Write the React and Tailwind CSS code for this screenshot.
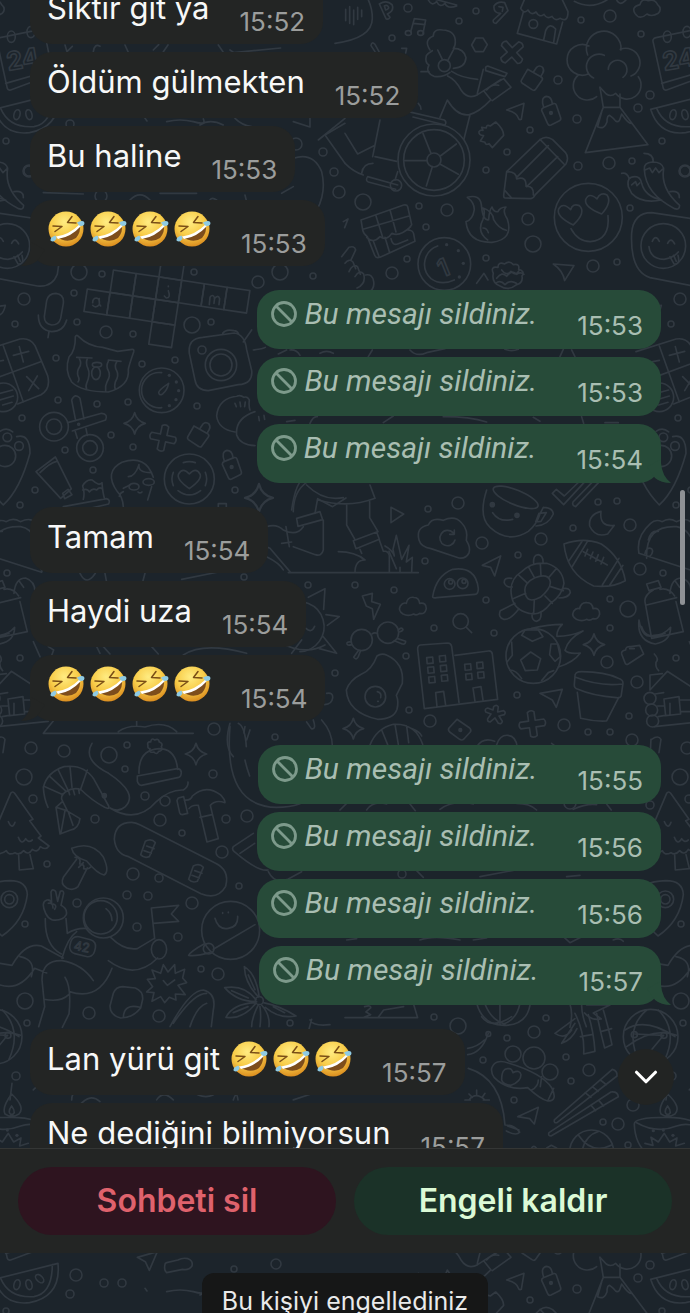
import { ChevronDown } from "lucide-react";

const groups = [
  {
    own: false,
    items: [
      { text: "Siktir git ya", time: "15:52" },
      { text: "Öldüm gülmekten", time: "15:52" },
      { text: "Bu haline", time: "15:53" },
      { laughs: 4, time: "15:53" },
    ],
  },
  {
    own: true,
    items: [{ time: "15:53" }, { time: "15:53" }, { time: "15:54" }],
  },
  {
    own: false,
    items: [
      { text: "Tamam", time: "15:54" },
      { text: "Haydi uza", time: "15:54" },
      { laughs: 4, time: "15:54" },
    ],
  },
  {
    own: true,
    items: [
      { time: "15:55" },
      { time: "15:56" },
      { time: "15:56" },
      { time: "15:57" },
    ],
  },
  {
    own: false,
    items: [
      { text: "Lan yürü git", laughs: 3, time: "15:57" },
      { text: "Ne dediğini bilmiyorsun", time: "15:57", open: true },
    ],
  },
];

// wallpaper bubbles: x, y, radius
const dots = [
  [408, 8, 4], [476, 11, 3], [459, 21, 3], [392, 38, 3], [581, 20, 3], [610, 16, 6], [641, 34, 3],
  [558, 80, 4], [650, 95, 4], [638, 108, 4], [577, 119, 4], [530, 130, 3], [507, 152, 3], [486, 170, 3],
  [578, 166, 4], [609, 163, 6], [632, 161, 3], [662, 141, 3], [685, 171, 5], [363, 202, 8], [419, 206, 3],
  [447, 210, 6], [426, 227, 3], [528, 219, 6], [533, 244, 8], [630, 208, 3], [407, 259, 3], [392, 273, 6],
  [486, 258, 3], [593, 266, 6], [617, 262, 3], [24, 299, 6], [15, 324, 3], [74, 293, 3], [77, 322, 3],
  [106, 332, 6], [133, 334, 3], [192, 325, 8], [211, 322, 3], [258, 282, 6], [280, 272, 8], [313, 276, 3],
  [56, 358, 3], [142, 364, 3], [175, 360, 3], [58, 400, 3], [97, 404, 3], [128, 402, 3], [197, 406, 3],
  [22, 418, 3], [111, 435, 3], [65, 450, 3], [133, 447, 3], [93, 470, 3], [35, 490, 3], [20, 505, 3],
  [235, 490, 3], [194, 272, 3], [102, 274, 3], [79, 272, 8], [428, 509, 3], [458, 503, 6], [482, 543, 6],
  [425, 561, 3], [355, 585, 3], [394, 590, 3], [518, 555, 3], [541, 539, 6], [573, 528, 3], [598, 502, 3],
  [617, 501, 3], [630, 525, 6], [640, 569, 6], [486, 600, 3], [494, 633, 3], [434, 628, 3], [406, 656, 3],
  [409, 710, 3], [430, 721, 6], [517, 695, 3], [610, 599, 3], [628, 609, 8], [610, 628, 3], [607, 662, 6],
  [637, 682, 6], [676, 658, 3], [629, 716, 3], [564, 725, 6], [588, 732, 3], [610, 732, 3], [632, 740, 6],
  [7, 573, 3], [244, 577, 3], [308, 585, 3], [335, 673, 3], [214, 729, 6], [275, 737, 3], [31, 748, 6],
  [64, 751, 6], [109, 755, 8], [127, 745, 3], [125, 769, 3], [24, 777, 8], [33, 799, 4], [213, 774, 4],
  [145, 796, 4], [165, 801, 5], [160, 820, 6], [95, 819, 4], [182, 833, 3], [226, 819, 4], [247, 816, 6],
  [222, 852, 6], [47, 864, 3], [133, 874, 6], [159, 878, 4], [239, 886, 3], [127, 895, 4], [148, 896, 4],
  [192, 903, 6], [77, 903, 4], [137, 927, 4], [25, 924, 3], [178, 937, 4], [201, 969, 3], [218, 974, 6],
  [25, 1001, 8], [89, 1013, 6], [159, 1016, 6], [27, 1023, 3], [290, 1023, 3], [650, 805, 4], [402, 874, 4],
  [570, 803, 6], [434, 1017, 3], [458, 1026, 8], [546, 1018, 3], [507, 1038, 3], [534, 1032, 6],
  [566, 1057, 3], [589, 1070, 6], [571, 1081, 3], [483, 1060, 3], [514, 1100, 3], [603, 1122, 3],
  [618, 1124, 6], [628, 1145, 3], [633, 1105, 6], [513, 1054, 8], [534, 1058, 11], [550, 1072, 8],
  [16, 1076, 4], [76, 105, 6], [104, 113, 4], [122, 113, 4], [70, 124, 4], [234, 99, 3], [276, 94, 5],
  [29, 171, 6], [101, 196, 6], [296, 144, 6], [323, 152, 4], [334, 172, 4], [339, 192, 6],
];

const crossword = [
  [3, -2], [1, -1], [2, -1], [3, -1], [4, -1], [5, -1], [6, -1],
  [0, 0], [1, 0], [2, 0], [3, 0], [3, 1],
];

const windows = [
  [245, 503], [283, 498], [248, 532], [286, 527], [251, 561], [289, 556],
  [359, 523], [395, 518], [362, 552], [398, 547],
];

const Sparkle = ({ x, y, r = 30 }) => (
  <path
    transform={`translate(${x} ${y}) scale(${r / 30})`}
    d="M0-30Q6-6 30 0Q6 6 0 30Q-6 6-30 0Q-6-6 0-30z"
  />
);

const Cross = ({ x, y, turn = 12 }) => (
  <path
    transform={`translate(${x} ${y}) rotate(${turn})`}
    d="M-10-36q10-8 20 0v26h26q8 10 0 20H10v26q-10 8-20 0V10h-26q-8-10 0-20h26z"
  />
);

const Cloud = ({ x, y }) => (
  <path
    transform={`translate(${x} ${y})`}
    d="M-30 20q-16-10-8-24q8-12 18-8q4-20 22-18q16 0 18 18q20-4 20 16q-4 18-20 14q-10 8-18 2q-16 8-32 0z"
  />
);

const Perfume = ({ x, y }) => (
  <g transform={`translate(${x} ${y})`}>
    <path d="M-15-27L26-4q6 4 2 10L8 34q-4 4-10 0l-30-20q-4-4-2-8z" />
    <path d="M2-18l10-15q8-8 18 0q6 10 0 18l-6 10" />
  </g>
);

const Lock = ({ x, y }) => (
  <g transform={`translate(${x} ${y})`}>
    <path d="M-28-8q0-6 5-8l30-12q7-2 9 4l13 38q2 7-5 10L0 36q-7 3-10-4z" />
    <path d="M-22-18q-10-28 8-32q16 0 18 22" />
    <circle r="4" fill="currentColor" />
  </g>
);

const Doodles = () => (
  <>
    {dots.map(([x, y, r]) => (
      <circle key={`${x}-${y}`} cx={x} cy={y} r={r} />
    ))}

    <g strokeWidth="5">
      {/* top right */}
      <g transform="translate(345 0) scale(.3333)">
        <path d="M-30 130Q82 115 82 55Q82 20 65-10M2 28v34M14 20v50M26 30v44M38 22v36M50 30v20" />
        <path d="M103 12q22-14 38 2q8 18-14 28l8 10q-4 8-12 4zM118 18q8-4 12 2t-8 10z" />
        <path d="M447 18q12-16 32-10l10 24-36 38q-10 0-8-10l22-20q-22 0-20-22zM462 20l12 2-2 12" />
        <path d="M250 0q10 20 25 5q10 20 25 5q8 18 35 8M260-5l75 20" />
        <path d="M208 56l34 4-8 40M208 56l-11 40M205 70l35 4" />
        <ellipse cx="190" cy="99" rx="9" ry="7" />
        <ellipse cx="227" cy="99" rx="9" ry="7" />
        <path d="M170 145l15 0-3 14M90 155l-12-18q2-14 12-4l12 22" />
        <path d="M392 114h22l13 20-12 21h-24l-11-20z" />
        <Cross x="501" y="157" turn="48" />
        <path d="M535 36l-18 64 118 32 18-66M540-5l-13 30q10 18 22 5q10 18 24 6q10 18 24 7q10 16 24 6q10 16 24 6q24 14 24-20l-20-42M596 120l6-28q12-26 30-5l-6 40" />
        <circle cx="565" cy="72" r="13" />
        <path d="M688 4q48 26 98-4M815 0q10 20 28 0" />
        <path d="M870 40q-12-20 15-26q5-20 25-12q20-6 28 12q14 12 2 26q-20 12-34 2q-22 20-36-2z" />
        <path d="M925 128q-4-12 8-15l122-25q10 0 12 10l25 125-127 47q-8 2-10-5zM950 250l140-40" />
        <ellipse cx="967" cy="110" rx="12" ry="17" />
        <ellipse cx="1026" cy="96" rx="12" ry="17" />
        <text x="958" y="212" transform="rotate(-10 958 212)" fontSize="76" fontFamily="Inter, sans-serif" fontWeight="700">24</text>
        <path d="M255 150q-20-30 10-42q0-22 28-18q38 2 38 35q0 14-6 20q32 0 38 28q-2 30-38 32M278 150l14 28M326 148l-18 34M262 152q-14 8-18 15q-5 22 8 28q-12 22 15 34q28 4 48-12M228 215h24" />
        <circle cx="298" cy="197" r="18" />
        <path d="M308 228q25 12 40 42q20 30 50 14l70-46M320 214q30 20 78 24M422 202q4-6 12-2l52 20-6 10-58-18zM415 208l-18 72M442 302l56-40-22-26-60 36 22 28M425 270q16-20 36-14M285 352l22-52q30 50 66 44q30-8 62-42M375 345l-18 72" />
        <Perfume x="563" y="235" />
        <path d="M485 330l52-20-8 48q-5 2-8-2q-5-20-36-26z" />
        <Lock x="618" y="339" />
        <path d="M410 382l14 2q0-12 12-6l16-12q24 22 24 40l-34 37-10-12q-10 6-12-4l-14-4 10-16q-16-2-14-12q4-6 12-4z" />
        <path d="M190 335l108 25q8 6 2 15l-96-24M220 310q8 8 8 18" />
        <circle cx="267" cy="480" r="108" />
        <circle cx="267" cy="480" r="91" />
        <circle cx="267" cy="480" r="21" />
        <path d="M178 482h68M286 468l48-36M286 493l54 30M262 500l-18 58M258 460l-24-60M-80 420l80-65M0 400l38 62 52-26M0 490q25 25 55 35M105 360l-22 110M90 470l65 14M50 520q4-30 34-30M68 530l90 25M68 530q-8 12 2 16l82 22M158 515l-8 25" />
        <circle cx="153" cy="556" r="17" />
        <path d="M730 222a46 46 0 1 1 2-84M728 165a52 52 0 1 1 100-15M826 148a43 43 0 1 1 32 80M880 230a38 38 0 0 1-68 50q-14 12-28 2l-19-20M700 225a38 38 0 1 0 55 65M746 234a34 34 0 1 1 32-68M790 208a28 28 0 1 1 44 24" />
        <path d="M765 262l10 60h50v-40M775 322l-54 136 188-24-84-112M770 336l-12 44q20 10 28-14q0-20 8-20l12 10q12 16 18 4l6-18q20 30 30 28" />
        <path d="M917 328L1107 280q10 100-85 118q-80 10-105-70zM935 325q25 60 100 55q55-10 55-96" />
        <ellipse cx="984" cy="344" rx="9" ry="15" transform="rotate(15 984 344)" />
        <ellipse cx="1020" cy="344" rx="9" ry="15" transform="rotate(-15 1020 344)" />
        <ellipse cx="1052" cy="326" rx="9" ry="15" transform="rotate(-45 1052 326)" />
        <path d="M485 515l100-96q18-14 38 0l38 38q12 15 2 35l-92 92q-6 12-15 12l-76-2q-4 0-4-8zM585 418l72 74M515 532l95-95M545 560l93-90M485 515q30 0 30 22q30-10 28 22q24-2 22 26M480 572l20 22" />
        <path d="M367 592q38-10 42 22q4 50 22 45q2-30 10-38q5 16 18 14q5-13 24-14q-12 12 4 36q20 62-46 70q-72 2-78-62q20-5 25-36q0-22-21-37zM428 720q-34-24-14-62q8-24 0-34q30 10 32 35q14 26 38 32M414 684q12 0 16 14" />
        <circle cx="730" cy="652" r="102" />
        <path d="M685 675q-52-25-44-48q12-22 36 2q6-20 26-12q22 20-18 58zM770 642q-52-20-48-43q10-24 34-2q10-22 30-12q16 22-16 57zM678 686q20 38 58 39q60-5 53-78" />
        <path d="M898 508q-2-20 24-22q30 0 34 20q-10 60 48 110q0 15-15 10q-88-44-91-118zM900 510l14-6 8 14 10-14 10 14 14-14M925 485q0-25-28-25M850 560q-6-30 20-30q16 0 20 20q10 40 60 50q-60 12-90-20zM852 535q-5-18-22-15M975 575q30-4 28 18M860 555l12-10 4 12 8-8" />
        <path d="M860 700q5-62 60-62l170 25q40 5 30 60l-15 100q-15 40-60 35l-130-25q-60-20-55-133z" />
        <circle cx="955" cy="738" r="67" />
        <path d="M922 724q10-22 21 0M968 730q10-20 21 2M912 740q5 38 45 38q28-4 43-22M975 770l12 22q20 4 12-26M986 766l8 18" />
        <path d="M48 660l128-45q10-2 12 5l12 54-12 16q16 0 18 12l4 22-105 48q-12 4-16-6l-22-56q-12-8-14-20zM65 712q20 20 40-2q20 14 36-10q22 12 56-20M92 645l22 70M135 630l18 66M54 688l138-40M85 724l18 48M120 712l14 46M138 716q4 22 20 16l30-12" />
        <circle cx="298" cy="792" r="79" />
        <path d="M278 738a58 58 0 0 0-20 98q30 22 70 4" />
        <text x="278" y="828" transform="rotate(-22 298 800)" fontSize="74" fontFamily="Inter, sans-serif" fontWeight="600">1</text>
        <g fill="currentColor" stroke="none">
          <circle cx="305" cy="734" r="5" />
          <circle cx="340" cy="752" r="5" />
          <circle cx="355" cy="790" r="5" />
          <circle cx="343" cy="831" r="5" />
        </g>
        <path d="M-10 770l22-28q16-6 20 8l-14 30M0 790q12-16 24-4l8 20M12 815q12-26 26-14l8 22M30 830q14-22 26-8q8 30-20 42M62 825q20-4 24 20t-20 35M-5 665l14-8-10 26" />
        <path d="M445 820q-10-22 14-18q0-18 20-10q14-12 26 2q20-4 16 14q20 6 10 20q4 20-16 26q-24 20-50 4q-26-10-20-38zM455 835q16-22 30-6q16-22 30-6q12-8 22 0M470 810q14 20 28 4q14 16 24-2M452 850q14-12 28 4q16-16 34-4M395 850l22-30 12 20" />
        <path d="M625 792l62 5-28 45q-5-30-34-50z" />
      </g>

      {/* crossword, cat, camera */}
      <g transform="translate(0 270) scale(.3333)">
        <g transform="translate(262 57) rotate(8.6)">
          {crossword.map(([col, row]) => (
            <rect key={`${col}${row}`} x={col * 69} y={row * 68} width="69" height="68" />
          ))}
        </g>
        <path d="M278 98q0-14 12-14q10 2 8 20q-12 12-20 2M298 86q-2 18 4 22M505 62q8 22-6 22l-6-6M505 48v2M628 104l2-22q8-12 14 2l-2 16M643 86q12-14 16 0l-2 18" />
        <path d="M140 92q5-22 28-22q25 3 22 30l-8 45q-5 20-27 20q-22-4-22-25zM115 135q0 45 40 50q35 0 45-35M147 185l-3 18M-8 110l24-4q-6 30-24 30" />
        <path d="M-60 245L60 207q30-5 45 20l38 90q10 40-20 57l-70 28M10 228l60 168M-40 335l162-60M40 256l46-12M58 230l12 46M80 320l36 36M112 318l-26 44M-10 275l20-4" />
        <circle cx="10" cy="382" r="43" />
        <path d="M-6 372l44-12M0 390l40-12M8 405l28-8" />
        <path d="M226 200q4-8 10 0q30 30 72 32l45 12 44-6q6 0 4 8q-14 40-16 52q5 50-60 68q-80 0-110-30q-22-35-8-75q20-20 19-61zM230 262l46 2M325 270l38 4M238 266q8 14 0 26t-4 26q6 12 0 18M262 266q-6 14 2 30t-4 44q-4 10 0 16M325 274q-8 14 0 28t-4 34q-6 12-4 26M350 276q-8 12 0 26t-4 34q-4 14 0 22" />
        <ellipse cx="291" cy="284" rx="14" ry="7" />
        <ellipse cx="288" cy="310" rx="13" ry="19" />
        <circle cx="485" cy="361" r="67" />
        <path d="M485 308a53 53 0 1 0 0 105M476 368q0-8 30-28q-4 20-18 32q-10 6-12-4z" />
        <g fill="currentColor" stroke="none">
          <circle cx="508" cy="316" r="5" />
          <circle cx="529" cy="336" r="5" />
          <circle cx="536" cy="362" r="5" />
          <circle cx="528" cy="389" r="5" />
          <circle cx="508" cy="407" r="5" />
        </g>
        <path d="M568 250q-5-45 40-48l95-13q32 5 37 50l15 62q5 40-40 43l-90 18q-35 0-40-32zM668 190q10-14 34-8q10 0 14 10M760 240q30-4 36-8M755 180l-25 36" />
        <circle cx="663" cy="285" r="47" />
        <circle cx="663" cy="285" r="33" />
        <circle cx="606" cy="240" r="12" />
        <path d="M715 378q-60 5-65 60q5 40 55 48M765 425q-60 20-55 70q10 30 55 32M712 378q10-4 20 4q10-4 16 8q-2 20 2 30M705 400l4 10M720 396l2 14M736 396l-2 14M776 440l2 12M792 436l2 12" />
        <circle cx="162" cy="470" r="43" />
        <circle cx="162" cy="470" r="23" />
        <circle cx="270" cy="534" r="40" />
        <circle cx="270" cy="534" r="22" />
        <path d="M215 390q10-22 25-5l12 62M215 390l12 62M203 458l102-28q20 2 12 20l-100 33M226 485l6 20M258 476l4 20" />
        <circle cx="236" cy="463" r="3" />
        <Sparkle x="404" y="460" r="32" />
        <Cross x="489" y="504" turn="12" />
        <Perfume x="597" y="495" />
        <Lock x="695" y="591" />
        <circle cx="568" cy="627" r="75" />
        <path d="M520 607a52 52 0 0 0 0 40M616 607a52 52 0 0 1 0 40M550 578q18-6 36 0M534 662q34 26 68 0M568 656q-40-28-32-44q12-22 32 0q20-22 32 0q8 16-32 44z" />
        <path d="M108 605l58-44 48 96-32 28zM120 608q30-30 50-34M188 670l16-12 12 16-22 12z" />
        <path d="M250 688q5-20-2-40q10-20 28-18q22 20 30 8q2 30 8 50M248 660q14-6 20 6q10-14 22-6q8-10 16-4M190 710l130-24q12 4 6 16l-130 30" />
        <path d="M370 710q-2-30-18-45q-42-60 14-88q72-25 94 45M455 650l-12 40M370 665q-10 4-12 14M385 620q20 0 32-36q-4 24 36 24M370 655l20-10" />
        <ellipse cx="402" cy="650" rx="15" ry="10" />
        <ellipse cx="446" cy="636" rx="17" ry="10" />
        <path d="M414 666q6 6 12 0" />
        <circle cx="22" cy="502" r="13" />
        <circle cx="57" cy="528" r="13" />
        <circle cx="15" cy="558" r="32" />
        <path d="M0 484q20-14 38 2M50 500q40-10 40 50q-30 110-80 155q-60-60-75-150" />
        <Sparkle x="777" y="684" r="42" />
        <path d="M655 715v-14h24v14M880 725q0-60 40-88M945 730l8-44 45 24 40-26M920 645q50 50 110 38" />
        {/* between the sent messages */}
        <path d="M860 240l-25 12M870 240q20-2 30 16M960 250q20-12 40 0M1105 260l12-20M1230 240q20 22 50 8l55-12M1515 238q20 8 40 0M1680 260l10-22M1715 240l10 20M860 455l25-4M930 460q10-22 22-20M1150 458l30-20M1330 440q80 0 130 16M1600 442l20 12M1745 440l6 20M1815 458l40 0" />
      </g>

      {/* cup, turtle, buildings */}
      <g transform="translate(345 490) scale(.3333)">
        <path d="M-80 30q90 26 170-5l-15-40M5 45v60l25 44M74 35v48l25 42M25 152l70-26 8 22-70 28zM45 178l5 12M103 150l12 34M115 183q16 0 18 14v50M-20 185q50 0 80 25q-30 0-30 37M-170 248h390" />
        <path d="M120 168q22 12 28 30l-4-20 10-42 16 72 22-42-8 50 18-14-2 44M132 184l22 52M165 232v14M138 52l38 20-38 26z" />
        <path d="M222 150q-10-38 28-45q10-24 45-14q35-16 55 8q20 20 14 52q14 22 8 38q-10 18-30 15l-84-28q-30-5-36-26zM324 128a23 23 0 1 0 6 22M328 120v13h-14" />
        <path d="M425 0q-26 80 10 112q55 50 115 12q25-20 35-52l10-20M595 52q28 0 30 20q-15 34-52 36M582 70l22-2-16 26-16 2zM443 68q20 30 60 20" />
        <ellipse cx="512" cy="22" rx="72" ry="22" transform="rotate(22 512 22)" />
        <circle cx="442" cy="44" r="6" fill="currentColor" />
        <circle cx="516" cy="76" r="6" fill="currentColor" />
        <path d="M622 10l34 34 70-76M622 10l12-12 24 20 56-54M684 36q-4 10 8 14l80-84M684 36l60-62" />
        <path d="M768 64q-38 10-34 44q16 36 54 24l20-26q-46 6-40-42z" />
        <path d="M657 162q60-22 112 0q60 40 72 110q-40 22-95 16q-80-36-89-126zM727 155l-46 76M712 153l-42 62M822 205l-50 80M834 226l-40 60M715 185l72 40M728 178l-8 20M744 186l-8 20M760 194l-8 20M776 202l-8 20" />
        <path d="M882 190q-10-50 35-90q14-14 35-5q20-14 42 0q30-14 44 2q30 10 34 60q0 50-14 90zM905 205q-4-100 90-95q60 10 62 130M910 150q8-30 30-26M900 190q4-20 20-14q8 10-6 24" />
        <path d="M263 320q10-62 60-82q70-10 77 58q0 16-10 17l-115 10q-12 2-12-3z" />
        <circle cx="314" cy="282" r="16" />
        <circle cx="353" cy="280" r="16" />
        <circle cx="317" cy="276" r="6" />
        <circle cx="357" cy="274" r="6" />
        <path d="M412 226l55-28-18 60-12-26z" />
        <path d="M500 320q-10-50 30-75q30-30 75-25q48 15 52 60q-5 35-40 60q-30 40-65 30q-45-10-52-50zM540 305q-4-26 30-42q40-15 46 12q2 20-30 47q-42 22-46-17zM568 262l-18-32M588 257l-2-36M612 262l22-26M617 290l38 12M600 318l22 22M568 330l-2 40M542 310l-38 16M548 280l-26-24M566 220q-2-26 14-26q16 4 14 26M500 265q-24-4-22 14q6 14 24 12M652 296q24-4 24 12q-6 16-34 16M510 340l-44 22q-8 20 10 26q18 4 46-32M562 370q-4 20 12 24q16-2 14-26" />
        <path d="M52 318l30-8-2 25 26 8-20 45-4-32-18-8z" />
        <Cloud x="204" y="352" />
        <Cloud x="724" y="368" />
        <circle cx="50" cy="450" r="32" />
        <circle cx="129" cy="428" r="32" />
        <path d="M81 432q6-6 16-2M18 456q-14-2-12 6q2 6 14 2M40 482l-14 20q8 10 14-2l6-16M160 420q10-10 14-2q0 6-12 8M158 446l24 8q0 10-10 8l-24-10" />
        <circle cx="347" cy="394" r="23" />
        <path d="M363 411l17 17" />
        <path d="M96 498q14-10 30-2q52 24 46 84l-18 36q8 20 2 42q-10 30-58 30q-90-20-94-88q10-30 46-48q30-12 46-54zM97 605q14 4 10 18M98 634h2" />
        <circle cx="91" cy="620" r="31" />
        <path d="M218 478q0-12 8-13l82-6q10 0 12 10l22 168M218 478l20 178 220-28-16-136q-2-10-12-9l-100 13M276 650l-4-42 24-4 6 42M390 634l-6-40 24-4 6 40" />
        {windows.map(([x, y]) => (
          <rect key={x} x={x} y={y} width="18" height="18" transform={`rotate(-5 ${x} ${y})`} />
        ))}
        <circle cx="565" cy="498" r="82" />
        <path d="M557 486l30 20-10 34-36 2-14-32zM530 436l10-16 40 0 14 20-32 14zM618 462l20 0 8 38-16 14-16-20zM500 456l2 40-16 20M494 540q20 0 36 26M590 572l20-24 16-6M560 415q50-12 92-12q-18 18-16 36q40 0 78-16q-46 24-54 58q12 12 46 8q-20 28-66 42" />
        <Sparkle x="747" y="464" r="32" />
        <path d="M830 492q-2-10 12-12q0-12 16-10l26-4 12 26-46 30q-8 4-10-4zM854 476h14" />
        <path d="M928 492q15 15 5 25q-2 15 8 25" />
        <circle cx="915" cy="625" r="18" />
        <circle cx="920" cy="660" r="18" />
        <circle cx="923" cy="693" r="18" />
        <path d="M915 600l52-56 92 60M915 600v-45l37-4M930 612l26-4M938 648h20M940 680l20-4M928 710l150-16M957 627l45-7 5 52-45 5zM1004 630h74M1008 665h74M975 640v34" />
        <path d="M690 560q-2-15 20-15q70 0 110 20q15 5 14 15l-5 35q0 10-15 8q-70-5-115-25q-12-3-11-14zM692 562q70 28 140 20M697 607l10 78q40 10 78 8l36-70" />
        <path d="M585 610l67-12-18 54-12-22z" />
        <path d="M446 650q8-8 14 0l-2 16 18-4q8 4 2 12l-16 4 10 16q-2 10-12 6l-10-16-14 12q-10 0-8-10l10-14-16-6q-4-10 6-12l16 6z" />
        <Cross x="562" y="702" turn="-8" />
        <path d="M336 688l38 26q6 6 2 12l-20 22q-6 4-12 0l-30-22q-6-6-2-12z" />
        <circle cx="346" cy="720" r="4" fill="currentColor" />
        <Sparkle x="25" y="716" r="31" />
        <path d="M75 765q20-50 70-62q66-4 88 60M150 703l10 60M110 720l18 44M185 708l6 50M200 716q26 10 30 22M395 770q20-30 54-16M455 764q10-30 34-28t28 36M620 760l20 16M920 748q20-14 28 0l-6 40M918 748l-2 40" />
        <path d="M900 335q-2-20 25-35M905 282l35-10 8 20-36 10zM900 335l20 110 95-20-22-90M905 345l90-22M945 298q26-6 44 20M975 310q4-46 35-46q30 10 28 46M990 272l14 20M882 390q10 60 45 46q30 0 50-24q0 42-46 50q-56-10-49-72zM890 410q14 44 70 20" />
      </g>

      {/* sun, hill and climber */}
      <g transform="translate(0 490) scale(.3333)">
        <path d="M860 345a75 75 0 1 1 40 140M925 322l50-26-4 62M978 374l40 6-36 26M970 440l40 50-52-14M918 415q16 16 26-6M890 390v4" />
        <path d="M130 730h450M130 730l34-42M355 725q30-22 80-14q60-20 95 14M410 690v18M690 700q-20 70 10 100M715 700q20 10 24 70M965 690q36 40 32 90M740 750l10-30M940 690q10 30-6 26l-14-20M875 60q10-70 30-90M800 110q30-10 50 10q40 20 60-10M800 185q-8-20 10-10l60 70M800 200q40 20 50 40M890 85l70-20 8 24-74 20zM970 90v90q-5 20-24 14l-66-24M845 160l30-4M868 170l-10-60M545 268l110-22M240 250q20 40 46 0M315 250l4 22M435 250l-6 22M100 455l20 45M145 470l16 10-8 22M290 470l10 20M310 470l20 22M455 470l20 22M550 495q60-40 190-5M835 455q80 44 140 10M905 450l-30 40M980 610q20-4 18 14t-24 20" />
      </g>

      {/* tree, shrimp, skateboard, astronaut */}
      <g transform="translate(0 740) scale(.3333)">
        <path d="M32 160q6-8 12 0l55 78-10 4 34 46-8 6 32 24q-10 14-26 2q-8 20-24 8q-12 20-26 4q-14 16-26 6q-20 10-26-6q-12 10-28 10M32 160l-36 85M25 245q12 26 20 2M55 292q10 26 22 4q8 14 20 4M56 346l2 44 42-4-10-42" />
        <path d="M180 282l-12-80 32 10 40 24q-4 30-28 34zM168 202l20-18 14 28M195 212l-12 66M205 216l14 40M188 184q-10-14 8-28q26-16 48-6q30 30 70 52q16 8 12-4l-44-80q-30-46-90-38q-50 16-62 62q2 34 14 60M135 140l54 24M150 110l46 42M175 90l28 58M210 80l6 62M262 90l-20 58M205 150l4 14M220 150l4 14M236 148l2 12" />
        <circle cx="313" cy="167" r="6" fill="currentColor" />
        <path d="M276 10q-30 50 50 90q90 60 50 100q-20 18-46 4q80 50 140-20q40-36 80-34q16-10 14-24" />
        <path d="M417 100q-2-70 60-74q50 0 56 62M412 108l120-22q10 0 12 10q0 14-8 16l-112 24q-8 0-12-12zM444 18q-4-14 8-12q2-14 12-6q12-6 14 6q12 4 6 14q6 12-8 14q-6 12-14 2q-16 4-12-10q-8-2-6-8z" />
        <Sparkle x="588" y="42" r="32" />
        <path d="M535 174l16-4 12 50-16 4q-6 0-8-6l-8-36zM553 180q20 2 24-12q40-36 84-4q14 14 14 24q-28-10-44 8l24 100-34 10-26-110q-20-2-28 10M600 232l36-8" />
        <path d="M395 247q-50 0-52 50q4 44 40 52l220 112q50 20 74-22q14-50-36-72l-220-112q-14-8-26-8z" />
        <path d="M436 304q18-10 30 4l-18 42q-16 6-26-6zM440 318l22 8M432 332l22 8M580 378q18-10 30 4l-18 42q-16 6-26-6zM584 392l22 8M576 406l22 8" />
        <path d="M215 325q60-24 95 26q20 44 2 54q-20-4-52-42q-40-12-45-38zM230 358l-40 54q-10 20 10 32q20 10 34-4l28-56M225 352q20 0 14 20q16 0 12 14q14 4 22-6M250 368l-14 14" />
        <circle cx="28" cy="478" r="25" />
        <circle cx="28" cy="478" r="14" />
        <path d="M-60 470q10-46 90-48q50 0 52 42q-10 80-76 124q-46-40-66-118z" />
        <circle cx="310" cy="534" r="60" />
        <circle cx="302" cy="532" r="50" />
        <path d="M318 506q18 14 18 36M137 520q-16-34 4-40q10-2 14 10l-2-34q4-12 14-2l6 30 8-30q10-4 10 6l-8 36q20 10 16 28q-12 20-42 16q-14-6-20-20M145 490q14-4 14 14M160 492q12 4 4 16M136 536q-2 80 48 106M198 536l4 44q30-18 62-14M230 575q-28 20-44 80M332 592q40 40 80 34M412 626l50-30M325 662q80 60 148-8M0 670l36 6q40-70 88-58l66 36M60 650q50 10 34 60M0 735q60 20 104-50l36 14M126 720q0-60 60-58q60 10 94 60M126 720l8 80M208 755q90 30 128-70M195 712q20 30 12 110l-20 40M132 778q50 10 74-14M134 800l-18 60" />
        <rect x="210" y="594" width="76" height="52" rx="20" transform="rotate(14 248 620)" />
        <text x="222" y="634" transform="rotate(10 248 620)" fontSize="38" strokeWidth="3" fontFamily="Inter, sans-serif">42</text>
        <path d="M464 596l-10-92 82-8-22 26 22 22-76 6" />
        <ellipse cx="477" cy="628" rx="23" ry="29" />
        <circle cx="692" cy="571" r="87" />
        <path d="M645 535q10 36 40 30q30-4 28-36M640 628l125-74M612 612q-40 22-46 34q20 4 64-8M668 518v2M685 516v2" />
        <circle cx="626" cy="626" r="16" />
        <path d="M490 674l14 22 20-22 2 26 28-12-6 26 12 14-26 8 22 28-30-2 2 18-20-8-14 16-12-18-26 14 6-26-22-2 18-16-16-22 24-2-10-26 26 10zM490 722l12 14 22-16" />
        <path d="M368 740l38 4q24 10 22 34l-6 26q-24 30-60 30q-32-8-32-36l10-38q8-20 28-20zM370 834q0-44 50-32" />
        <path d="M510 860q60-110 100-110q40 10 30 60l-6 50M520 850q60-90 100-90M570 860q20-60 50-70" />
        <path d="M775 770q-40-40-42-90q34 20 44 86M770 785q-60 0-96-42q60-10 94 36M768 790q-40 50-90 42q20-40 86-44M775 795q-20 40-20 65M785 795q26 30 22 65M790 788q50 10 98 40q-50 10-92-26M780 800q4 30 0 60M745 705l20 44M695 752l50 22M700 818l44-18M820 800l34 18" />
        <circle cx="778" cy="782" r="12" />
        <path d="M690-40q-20 240 140 242q80 0 110-40M735-40q-4 20-2 20M735 60q4 20 14 48M700 320l60-40M700 320q-6 8 4 16q70 60 100 54M720 340l44-30M805 395q20 40 60 22l40-22M930 840q10 20 60 14M935 838l-8 30" />
        {/* gaps between bubbles on the right */}
        <path d="M1040 190l-20 20M1100 210q20-30 60-18M1230 192l16 20M1320 208q40-30 100-16M1550 190q40 0 60 20M1720 208q40-18 70-14M1820 192l14 18M1250 392l20 20M1440 410l170-32M1700 410l40-4M1040 600l30-4M1260 600q40-16 120 0M1420 600l40-6M1690 590l20 18 40-20M1840 600q20-8 30 4" />
        <path d="M1035 833h218l-12-40M1094 800q20-6 18 4l-14 12 14 8-20 8M1135 832l16-22 60-10M1430 790q20 70 90 66q60-4 70-60M1455 792q20 50 60 60M1560 790q-10 50-50 62M1500 792v60M1710 792q10 30 0 70M1745 794q0 30 14 66M1760 795l70 0-50 24 24 18q-30 6-50-18" />
      </g>

      {/* chopsticks, globe, lamp */}
      <g transform="translate(345 1020) scale(.3333)">
        <path d="M410-10q30 40 90 0M430 40q-20 60-62 64M418 60q-20 20-50 25M370 145q100 30 110 170q30 0 44 22q-10 12-40-4M488 318l34 12M372 240q20-26 48 0M395 210v14M360 240h16M415 240h18M372 222l10 10M420 220l-8 12" />
        <circle cx="430" cy="42" r="7" />
        <path d="M440 145q10-30 50-16q100 30 130 74q20 40-12 40q-20-4-60-40q-60 10-100-30q-10-12-8-28zM470 180q0-36 20-34q10-2 14 12q20-10 24 6q0 20-30 32q-24-2-28-16zM590 170l-4 30M560 210q20-10 20-30M626 205l-18 38" />
        <path d="M518 290l62-28-12 50-14-16z" />
        <path d="M628 300l174-152q16 4 14 20l-180 140q-10 2-8-8zM612 338l186-122q20-2 22 14l-202 118q-10 0-6-10zM720 218l18 14M742 200l18 14M766 180l18 14M738 256l14 16M762 242l14 16" />
        <path d="M690-20q30 60 26 122l34-8q-4-60-20-110M755-20q10 50 24 104l22-10q-10-50-26-104M630 40l60-44M630 40q30 20 50-10M650 70l40-60M650 70q30-10 46-44M706 50l34-6M770 34l30-8" />
        <circle cx="917" cy="50" r="82" />
        <path d="M840 30q60-40 150 20M845 80q80-60 150-34M905-30q-70 60-20 160M940-30q60 60 20 148M870 42l86 4-50 60" />
        <circle cx="868" cy="44" r="9" />
        <circle cx="957" cy="46" r="9" />
        <circle cx="740" cy="396" r="66" />
        <path d="M700 345q40 60 100 30M712 390q10-44 50-56M560 384q6-10 14 0M605 384l14-8 16 8" />
        <path d="M868 312q0-20 92-20q90-2 120 40q0 60-70 72h-100q-40-30-42-92zM875 308q60 34 120 10q40-14 84 14M968 222q-30 40-20 60q20 14 42 0q20-20-22-60zM968 258q-12 16-4 24q8 4 12-4q0-10-8-20zM960 290l8-4 8 4M900 370l24 6-6-24 22 14 18-26 16 26 22-12-4 24 26-8" />
        <g fill="currentColor" stroke="none">
          <circle cx="925" cy="332" r="5" />
          <circle cx="955" cy="330" r="5" />
          <circle cx="984" cy="346" r="5" />
        </g>
      </g>

      {/* between the received messages */}
      <g transform="scale(.3333)">
        <path d="M195 135l6 20 16-16M280 155q4-26 20-16M375 135l10 22M460 150l16-16M490 155l14-20M655 135l14 20M690 150l12 8 140-14M435 355l6 8M500 365q40-10 80 0q40 12 30-8M600 375q30-20 70 0M705 355q20 20 50 25M880 365l50 16v-26M880 475q60-20 85 40q15 60-14 115M845 580l35-20M130 578l120 4M390 600q30-30 60 0M480 580h110M630 600q6-10 20 0M735 585l4 16M1035 370l-60 35 60 85" />
        <path d="M20 3560l90-20-10-20M258 3520q2 18 16 18h50q10 0 8-16M350 3522q6 26 20 0M525 3520l-8 30M490 3555l60-25 60 10 40-16M725 3525q20 30 50 0M870 3525q-20 40-60 80M845 3590l-60 40" />
        <path d="M30 3300l6-50M100 3270l20-20M215 3300q0-40 60-30l50 10M240 3315q30-36 60-10M430 3275q4-30 20 0M470 3300q20-30 50 0M570 3270q50 40 90 0M700 3300q10-30 14 0M880 3300l60-20" />
        <path d="M412 262l60-17-24 56-12-26z" />
        <path d="M500 278l34-8q14-8 30-4q16 6 12 22q-10 14-28 10l-48 10q-10-8-4-28z" />
      </g>
    </g>
  </>
);

// the artwork tiles every 656 x 1170
const Wallpaper = () => (
  <svg
    aria-hidden="true"
    className="absolute inset-0 h-full w-full text-[#313941]"
    fill="none"
    stroke="currentColor"
    strokeWidth="1.6"
    strokeLinecap="round"
    strokeLinejoin="round"
  >
    <g id="doodles">
      <Doodles />
    </g>
    <use href="#doodles" x="656" />
    <use href="#doodles" x="-656" />
    <use href="#doodles" y="1170" />
    <use href="#doodles" x="-656" y="1170" />
    <use href="#doodles" x="656" y="1170" />
  </svg>
);

const Laugh = () => (
  <svg viewBox="0 0 38 38" className="h-[38px] w-[38px]" role="img" aria-label="🤣">
    <defs>
      <radialGradient id="face" cx="45%" cy="30%" r="72%">
        <stop offset="0" stopColor="#ffec82" />
        <stop offset=".55" stopColor="#f8cc48" />
        <stop offset="1" stopColor="#d98a1d" />
      </radialGradient>
    </defs>
    <circle cx="19" cy="19" r="17.5" fill="url(#face)" />
    <path d="M10 27Q22 26 33 15Q34 22 29 28Q20 34 10 27z" fill="#7d4d1c" />
    <path d="M9 26.500Q22 25 33 14L33.500 16.500Q24 27 11 29z" fill="#fff" />
    <path
      d="M6 16l9 .5-7 5M25 6.500l-4.500 6 8.500 .5"
      fill="none"
      stroke="#7a4e16"
      strokeWidth="1.500"
      strokeLinecap="round"
      strokeLinejoin="round"
    />
    <path d="M30 12.500Q37 9.500 37.500 13Q37 17 32 15.500z" fill="#8fcbe4" />
    <path d="M8.500 25.500Q3 27 3.500 30.500Q7 33 9.500 28.500z" fill="#8fcbe4" />
  </svg>
);

const BannedIcon = () => (
  <svg viewBox="0 0 26 26" className="h-[26px] w-[26px] text-[#7d9a8b]" fill="none" stroke="currentColor" strokeWidth="2.800" aria-hidden="true">
    <circle cx="13" cy="13" r="11.500" />
    <path d="M4.800 4.800l16.400 16.400" />
  </svg>
);

const Tail = ({ own }) => (
  <svg
    viewBox="0 0 24 24"
    aria-hidden="true"
    className={
      own
        ? "absolute -right-[10px] bottom-0 h-6 w-6 text-[#274b39]"
        : "absolute -left-[9px] bottom-0 h-6 w-6 -scale-x-100 text-[#232524]"
    }
  >
    <path d="M0 8L14 0V4Q15 17 24 24Q14 24 8 19z" fill="currentColor" />
  </svg>
);

const Received = ({ message, last }) => (
  <li className="relative flex h-[66px] items-start gap-[30px] self-start rounded-[22px] bg-[#232524] pr-[18px] pl-[17px]">
    <p className="flex items-center gap-[10px] pt-[10px] text-[31px] leading-10 text-[#f7f8f8]">
      {message.text}
      {message.laughs && (
        <span className="flex gap-1">
          {Array.from({ length: message.laughs }, (_, i) => (
            <Laugh key={i} />
          ))}
        </span>
      )}
    </p>
    <time className="pt-7 text-[26px] leading-8 text-[#9b9d9c]">{message.time}</time>
    {last && !message.open && <Tail />}
  </li>
);

const Deleted = ({ message, last }) => (
  <li className="relative flex h-[59px] items-start self-end rounded-[22px] bg-[#274b39] pr-[18px] pl-[14px]">
    <p className="flex items-center gap-[7px] pt-1 font-[Roboto,sans-serif] text-[30px] leading-10 text-[#a9beb2] italic">
      <BannedIcon />
      Bu mesajı sildiniz.
    </p>
    <time className="pt-5 pl-10 text-[26px] leading-8 text-[#a9beb2]">{message.time}</time>
    {last && <Tail own />}
  </li>
);

const App = () => {
  return (
    <main className="relative flex h-screen flex-col overflow-hidden bg-[#1c242b] font-[Inter,sans-serif]">
      <Wallpaper />

      {/* Messages */}
      <section className="relative min-h-0 flex-1 overflow-hidden">
        <div className="-mt-[22px] flex flex-col gap-6 pr-[29px] pl-[30px]">
          {groups.map((group, g) => (
            <ul key={g} className="flex flex-col gap-2">
              {group.items.map((message, i) => {
                const Bubble = group.own ? Deleted : Received;
                return (
                  <Bubble
                    key={i}
                    message={message}
                    last={i === group.items.length - 1}
                  />
                );
              })}
            </ul>
          ))}
        </div>

        <div className="absolute top-[490px] right-[5px] h-[115px] w-[5px] rounded-full bg-[#8e9195]" />
        <button
          aria-label="En alta in"
          className="absolute right-4 bottom-[43px] flex h-14 w-14 items-center justify-center rounded-full bg-[#222423] text-white"
        >
          <ChevronDown size={38} strokeWidth={2} />
        </button>
      </section>

      {/* Actions */}
      <section className="relative flex gap-[18px] border-t border-[#343635] bg-[#232524] px-[18px] py-[18px]">
        <button className="h-[68px] flex-1 rounded-full bg-[#2e141f] text-[32px] font-semibold text-[#df626c]">
          Sohbeti sil
        </button>
        <button className="h-[68px] flex-1 rounded-full bg-[#1b3228] text-[32px] font-semibold text-[#dcfad6]">
          Engeli kaldır
        </button>
      </section>

      {/* Notice */}
      <section className="relative flex h-[60px] justify-center overflow-hidden pt-5">
        <p className="h-14 rounded-xl bg-[#161717] px-5 pt-[10px] text-[25px] leading-9 text-[#e9eaea]">
          Bu kişiyi engellediniz
        </p>
      </section>
    </main>
  );
};

export default App;
